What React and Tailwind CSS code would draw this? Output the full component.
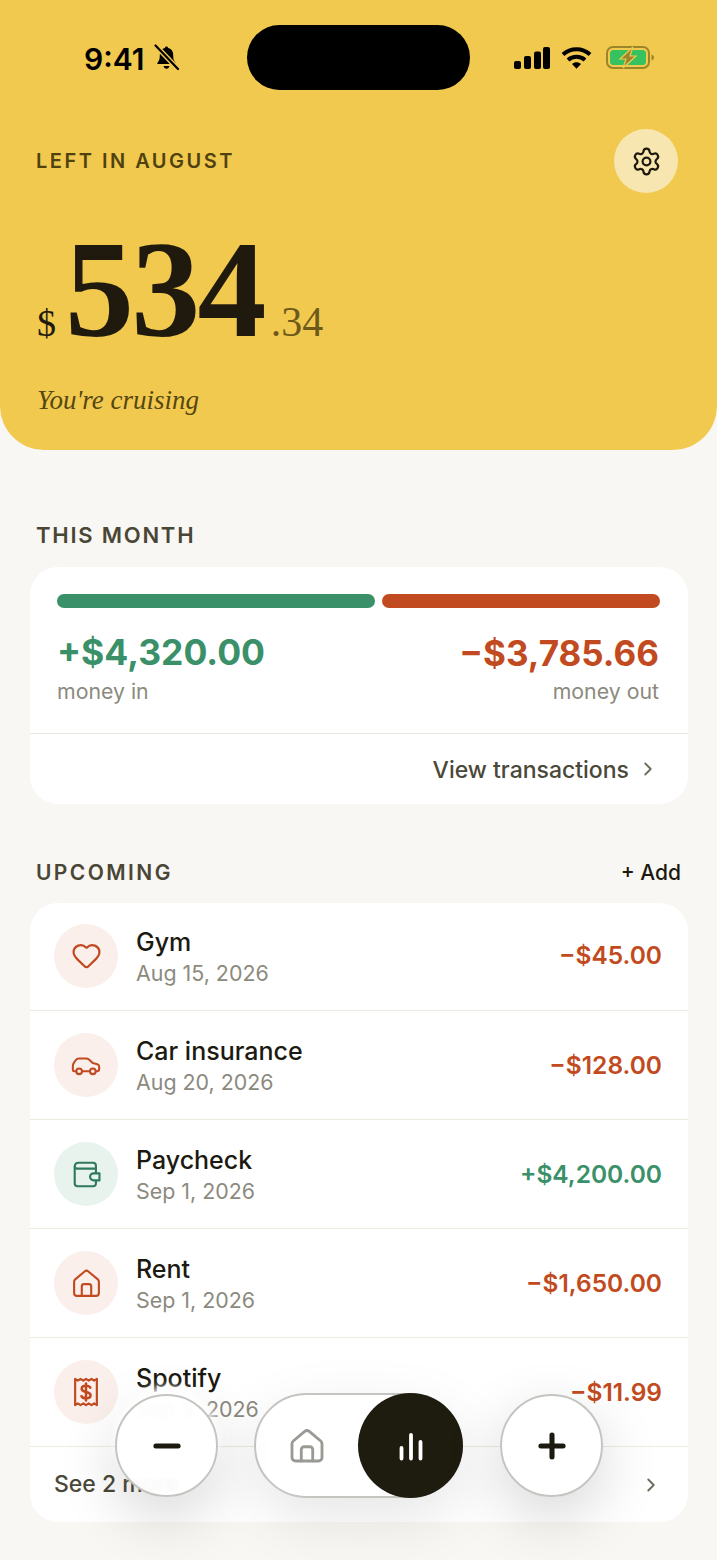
import { ChevronRight, Heart, Minus, Plus, Settings } from "lucide-react";

const UI = "font-['Inter',sans-serif]";
const SERIF = "font-['Liberation_Serif',serif]";

const CarIcon = () => (
  <svg width="32" height="32" viewBox="0 0 28 28" fill="none" stroke="currentColor" strokeWidth="1.800" strokeLinecap="round" strokeLinejoin="round">
    <path d="M5.500 19.500H3.600c-.7 0-1.100-.5-1.100-1.100v-3.600c0-1.100.4-2.200 1.100-3l1.600-2.200c.6-.9 1.600-1.300 2.600-1.300h6.400c.9 0 1.700.3 2.400.9l3.300 3.100 4 1c1 .3 1.600 1.100 1.600 2.100v2.100c0 1.100-.8 2-1.900 2h-1" />
    <path d="M10.500 19.500h7" />
    <circle cx="8" cy="19.500" r="2.500" />
    <circle cx="20" cy="19.500" r="2.500" />
  </svg>
);

const WalletIcon = () => (
  <svg width="33" height="33" viewBox="0 0 28 28" fill="none" stroke="currentColor" strokeWidth="1.800" strokeLinecap="round" strokeLinejoin="round">
    <path d="M4 7.500C4 5.500 5.300 4 7.300 4h12.200c1.400 0 2.500 1.100 2.500 2.500V9" />
    <path d="M4 7.500v14c0 1.400 1.100 2.500 2.500 2.500h13c1.400 0 2.500-1.100 2.500-2.500V9H7.300C5.500 9 4 8.500 4 7.500Z" />
    <path d="M25 13h-5a3 3 0 0 0 0 6h5v-6Z" fill="#e8f3ee" />
  </svg>
);

const HomeIcon = ({ size = 33, strokeWidth = 1.800 }) => (
  <svg width={size} height={size} viewBox="0 0 28 28" fill="none" stroke="currentColor" strokeWidth={strokeWidth} strokeLinecap="round" strokeLinejoin="round">
    <path d="M3.500 12.500c0-.8.300-1.500.9-2l8-6.700c.9-.8 2.300-.8 3.200 0l8 6.700c.6.500.9 1.200.9 2V22c0 1.400-1.100 2.500-2.500 2.500H6c-1.400 0-2.500-1.100-2.500-2.500v-9.500Z" />
    <path d="M10 24.500v-8c0-1.100.9-2 2-2h4c1.100 0 2 .9 2 2v8" />
  </svg>
);

const ReceiptIcon = () => (
  <svg width="32" height="32" viewBox="0 0 28 28" fill="none" stroke="currentColor" strokeWidth="1.900" strokeLinejoin="round" strokeLinecap="round">
    <path d="M4.500 2.500v23l2.400-1.500 2.300 1.500 2.400-1.500 2.400 1.500 2.400-1.500 2.400 1.500 2.300-1.500 2.400 1.500v-23l-2.400 1.500-2.300-1.500-2.400 1.500-2.400-1.500-2.400 1.500-2.400-1.500-2.300 1.500-2.400-1.500Z" />
    <path d="M17.800 10.200c-.5-1-1.900-1.700-3.800-1.700-2.100 0-3.800 1-3.800 2.700 0 3.800 7.800 1.800 7.800 5.600 0 1.700-1.800 2.700-4 2.700-1.900 0-3.400-.7-4-1.900" strokeWidth="2.200" />
    <path d="M14 6.500v15" strokeWidth="2.200" />
  </svg>
);

const BarsIcon = () => (
  <svg width="26" height="30" viewBox="0 0 26 30" fill="none" stroke="currentColor" strokeWidth="3.800" strokeLinecap="round">
    <path d="M3.500 27.500V17M13 27.500V4M22.500 27.500V11" />
  </svg>
);

const RED_ICON = "bg-[#faefeb] text-[#c24a20]";
const GREEN_ICON = "bg-[#e8f3ee] text-[#2f7a5c]";

const upcoming = [
  { name: "Gym", date: "Aug 15, 2026", amount: "−$45.00", tone: RED_ICON, icon: <Heart size={31} strokeWidth={1.700} /> },
  { name: "Car insurance", date: "Aug 20, 2026", amount: "−$128.00", tone: RED_ICON, icon: <CarIcon /> },
  { name: "Paycheck", date: "Sep 1, 2026", amount: "+$4,200.00", tone: GREEN_ICON, icon: <WalletIcon />, income: true },
  { name: "Rent", date: "Sep 1, 2026", amount: "−$1,650.00", tone: RED_ICON, icon: <HomeIcon /> },
  { name: "Spotify", date: "Sep 5, 2026", amount: "−$11.99", tone: RED_ICON, icon: <ReceiptIcon /> },
];

function StatusBar() {
  return (
    <div className="flex items-center pt-[25px]">
      <div className="flex w-[247px] items-center pl-[84px]">
        <span className="pt-[2px] text-[30px] leading-none font-semibold text-black">9:41</span>
        <svg className="ml-[9px]" width="27" height="27" viewBox="0 0 27 27">
          <path d="M13.500 2.500c-.9 0-1.600.6-1.700 1.500-3 .7-5 3.200-5 6.600 0 4.700-.7 6.400-2.200 8-.5.500-.6 1.300.2 1.300h17.400c.8 0 .7-.8.200-1.300-1.500-1.600-2.200-3.300-2.200-8 0-3.400-2-5.900-5-6.600-.1-.9-.8-1.500-1.700-1.500Z" fill="#000" />
          <path d="M10.500 22h6c-.3 1.600-1.500 2.700-3 2.700s-2.700-1.100-3-2.700Z" fill="#000" />
          <path d="M2.500 1.500 25 25" stroke="#f2c94f" strokeWidth="5" />
          <path d="M2.500 1.500 25 25" stroke="#000" strokeWidth="2.200" strokeLinecap="round" />
        </svg>
      </div>
      <div className="h-[65px] w-[223px] rounded-full bg-black" />
      <div className="ml-[44px] flex items-center">
        <svg width="36" height="22" viewBox="0 0 36 22" fill="#000">
          <rect x="0" y="14" width="7" height="8" rx="2" />
          <rect x="10" y="9" width="7" height="13" rx="2" />
          <rect x="20" y="4.500" width="7" height="17.500" rx="2" />
          <rect x="29" y="0" width="7" height="22" rx="2" />
        </svg>
        <svg className="ml-[11px]" width="31" height="23" viewBox="0 0 31 23" fill="none" stroke="#000" strokeWidth="4">
          <path d="M2 8.500c7.500-7 19.500-7 27 0" />
          <path d="M7 14c4.700-4.300 12.300-4.300 17 0" />
          <path d="M15.500 22.800 11 18c2.500-2.200 6.500-2.200 9 0l-4.500 4.800Z" fill="#000" stroke="none" />
        </svg>
        <svg className="ml-[14px]" width="48" height="23" viewBox="0 0 48 23">
          <rect x="1" y="1" width="42" height="21" rx="6" fill="none" stroke="#9c8428" strokeWidth="2" />
          <rect x="4" y="4" width="36" height="15" rx="3.500" fill="#35c25f" />
          <path d="M45.500 8.500c1.500.5 2.500 1.600 2.500 3s-1 2.500-2.500 3v-6Z" fill="#9c8428" />
          <path d="M27 1 14 13h6l-3 9 13-12h-6l3-9Z" fill="#9c8428" stroke="#f2c94f" strokeWidth="1.200" />
        </svg>
      </div>
    </div>
  );
}

function Hero() {
  return (
    <header className="h-[450px] rounded-b-[44px] bg-[#f2c94f]">
      <StatusBar />
      <div className="mt-[39px] flex items-center justify-between pr-[39px] pl-[36px]">
        <span className="text-[20px] font-semibold tracking-[0.125em] text-[#4f4210]">LEFT IN AUGUST</span>
        <button className="flex h-16 w-16 items-center justify-center rounded-full bg-[#f8e6b0] text-[#1c190f]">
          <Settings size={31} strokeWidth={1.700} />
        </button>
      </div>
      <div className={`${SERIF} mt-[17px] flex items-baseline pl-[37px] text-[#1f1a0d]`}>
        <span className="text-[38px] leading-none">$</span>
        <span className="ml-[9px] text-[138px] leading-[160px] font-bold tracking-[-0.02em]">534</span>
        <span className="ml-[7px] text-[42px] leading-none text-[#6d5a1a]">.34</span>
      </div>
      <p className={`${SERIF} mt-[14px] pl-[37px] text-[27px] leading-[32px] text-[#55470f] italic`}>You're cruising</p>
    </header>
  );
}

function ThisMonth() {
  return (
    <section className="pt-[71px] pr-[29px] pl-[30px]">
      <h2 className="pl-[6px] text-[22px] leading-[28px] font-semibold tracking-[0.08em] text-[#4a4635]">THIS MONTH</h2>
      <div className="mt-[18px] h-[237px] overflow-hidden rounded-[28px] bg-white">
        <div className="pt-[27px] pr-[29px] pl-[27px]">
          <div className="flex gap-[7px]">
            <div className="h-[14px] w-[318px] shrink-0 rounded-full bg-[#3a9068]" />
            <div className="h-[14px] w-[278px] shrink-0 rounded-full bg-[#c24a20]" />
          </div>
          <div className="mt-[23px] flex justify-between">
            <div>
              <div className="text-[35.500px] leading-[44px] font-bold text-[#3a9068]">+$4,320.00</div>
              <div className="pt-[4px] text-[21.300px] leading-[24px] text-[#8c8a7e]">money in</div>
            </div>
            <div className="text-right">
              <div className="text-[35px] leading-[44px] font-bold text-[#c24a20]">−$3,785.66</div>
              <div className="pt-[4px] text-[21.300px] leading-[24px] text-[#8c8a7e]">money out</div>
            </div>
          </div>
        </div>
        <div className="mt-[30px] flex h-[71px] items-center justify-end gap-[8px] border-t border-[#e8e6df] pr-[29px]">
          <span className="pt-[2px] text-[23px] font-medium text-[#4a4838]">View transactions</span>
          <ChevronRight size={22} strokeWidth={2} className="text-[#6d6b5c]" />
        </div>
      </div>
    </section>
  );
}

function Upcoming() {
  return (
    <section className="pt-[55px] pr-[29px] pl-[30px]">
      <div className="flex items-center justify-between pr-[7px] pl-[6px]">
        <h2 className="text-[21px] leading-[28px] font-semibold tracking-[0.115em] text-[#4a4635]">UPCOMING</h2>
        <button className="text-[21px] leading-[28px] font-medium text-[#1c1a10]">+ Add</button>
      </div>
      <div className="mt-[16px] overflow-hidden rounded-[28px] bg-white">
        {upcoming.map((row) => (
          <div key={row.name} className="flex h-[109px] items-center border-b border-[#ecebe2] pr-[26px] pl-[24px] first:h-[108px] first:pb-[2px]">
            <div className={`flex h-16 w-16 shrink-0 items-center justify-center rounded-full ${row.tone}`}>{row.icon}</div>
            <div className="ml-[18px] flex-1 pt-[1px]">
              <div className="text-[25px] leading-[32px] font-medium text-[#1c1a10]">{row.name}</div>
              <div className="mt-[1px] text-[21.400px] leading-[28px] text-[#8c8a7e]">{row.date}</div>
            </div>
            <div className={`text-[24.500px] font-semibold ${row.income ? "text-[#3a9068]" : "text-[#c24a20]"}`}>{row.amount}</div>
          </div>
        ))}
        <div className="flex h-[75px] items-center justify-between pr-[26px] pl-[24px]">
          <span className="text-[23px] font-medium text-[#4a4838]">See 2 more</span>
          <ChevronRight size={22} strokeWidth={2} className="text-[#6d6b5c]" />
        </div>
      </div>
    </section>
  );
}

function FloatingNav() {
  return (
    <div className="absolute top-[1393px] left-[115px] flex items-center">
      <button className="flex h-[103px] w-[103px] items-center justify-center rounded-full border-2 border-[#c4c4c0] bg-white/95 text-[#1c1a10] shadow-[0_-7px_10px_rgba(255,255,255,0.95),0_20px_60px_rgba(0,0,0,0.16)] backdrop-blur-[2px]">
        <Minus size={38} strokeWidth={3.200} />
      </button>
      <div className="ml-[36px] flex h-[105px] w-[209px] items-center justify-between rounded-full border-2 border-[#c4c4c0] bg-white/95 shadow-[0_20px_60px_rgba(0,0,0,0.10)]">
        <div className="ml-[31px] text-[#9a9a94]">
          <HomeIcon size={40} strokeWidth={2} />
        </div>
        <div className="-mr-[2px] flex h-[105px] w-[105px] items-center justify-center rounded-full bg-[#1e1c0f] text-white">
          <BarsIcon />
        </div>
      </div>
      <button className="ml-[37px] flex h-[103px] w-[103px] items-center justify-center rounded-full border-2 border-[#c4c4c0] bg-white/95 text-[#1c1a10] shadow-[0_20px_60px_rgba(0,0,0,0.16)]">
        <Plus size={38} strokeWidth={3.200} />
      </button>
    </div>
  );
}

export default function App() {
  return (
    <div className={`${UI} relative h-[1560px] w-[717px] overflow-hidden bg-[#f9f7f3]`}>
      <Hero />
      <ThisMonth />
      <Upcoming />
      <FloatingNav />
    </div>
  );
}
